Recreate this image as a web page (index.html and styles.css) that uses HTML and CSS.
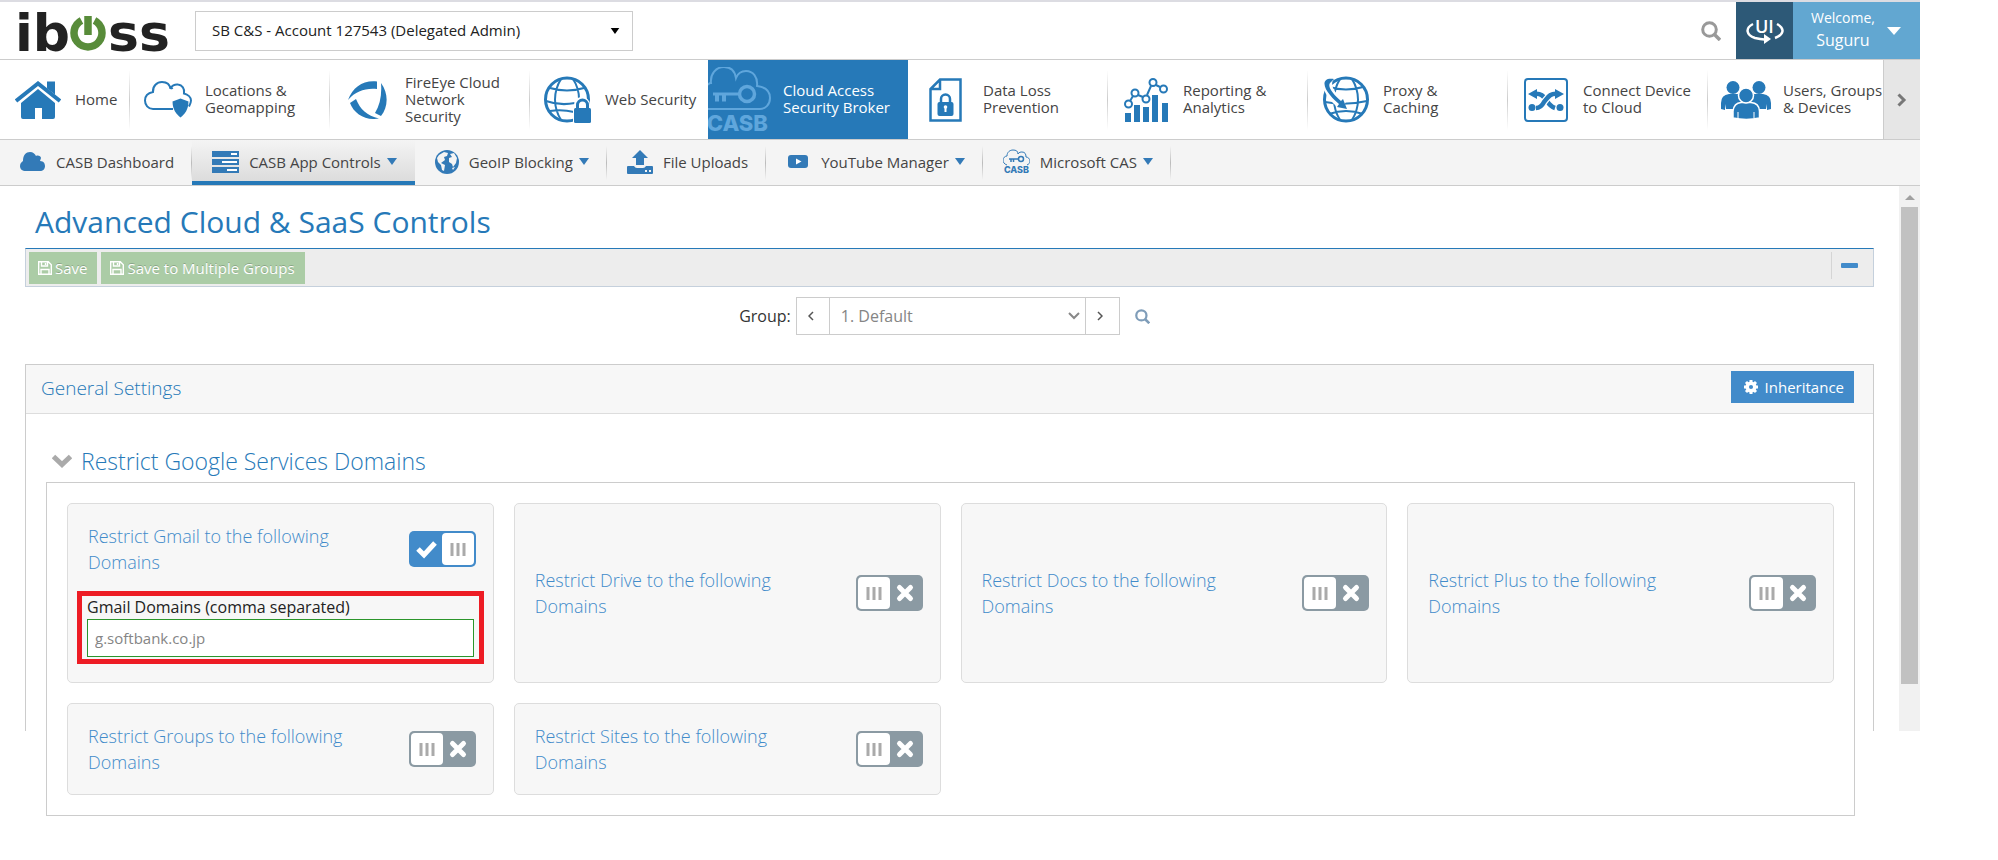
FILE: index.html
```html
<!DOCTYPE html>
<html lang="en">
<head>
<meta charset="utf-8">
<title>Advanced Cloud &amp; SaaS Controls</title>
<link rel="stylesheet" href="styles.css">
</head>
<body>
<svg class="defs" aria-hidden="true">
  <symbol id="caret" viewBox="0 0 10 7"><path d="M0 0h10L5 7z" fill="currentColor"/></symbol>
  <symbol id="magnifier" viewBox="0 0 20 20"><circle cx="8.500" cy="8.500" r="6.800" fill="none" stroke="currentColor" stroke-width="3"/><path d="M13 13l6 6" stroke="currentColor" stroke-width="3.500"/></symbol>
  <symbol id="floppy" viewBox="0 0 14 14"><path d="M.7.700h9.600l3 3v9.600H.7zM3 13V8.500h8V13M3.500 1v4h6V1M7.500 2v2" fill="none" stroke="currentColor" stroke-width="1.400"/></symbol>
  <symbol id="casb" viewBox="0 0 64 66">
    <path d="M0 18C1 16 2 16 3 16 2 7 8 0 16 0s11 5 12 11c2-5 6-7 10-7 7 0 12 6 11 15 8 1 13 5 13 12s-5 11-10 11H0" fill="none" stroke="currentColor" stroke-width="2"/>
    <circle cx="39" cy="27" r="7.500" fill="none" stroke="currentColor" stroke-width="3.500"/>
    <path d="M5 25.500h27v3H18v6h-4v-6h-3v6H7v-6H5z" fill="currentColor"/>
    <text x="60" y="64" text-anchor="end" class="casb-text">CASB</text>
  </symbol>
  <symbol id="toggle-on" viewBox="0 0 67 36">
    <rect x="33" y="2" width="32" height="32" rx="4" fill="#fff"/>
    <path d="M43 12v13M49 12v13M55 12v13" stroke="#aaa" stroke-width="3"/>
    <path d="M9 18l6 6 11-12" fill="none" stroke="#fff" stroke-width="5"/>
  </symbol>
  <symbol id="toggle-off" viewBox="0 0 67 36">
    <rect x="2" y="2" width="32" height="32" rx="4" fill="#fff"/>
    <path d="M12 12v13M18 12v13M24 12v13" stroke="#aaa" stroke-width="3"/>
    <path d="M43.500 12.500l11 11M54.500 12.500l-11 11" fill="none" stroke="#fff" stroke-width="5" stroke-linecap="round"/>
  </symbol>
</svg>

<div class="app">
  <header class="topbar">
    <a class="logo" href="#" aria-label="iboss">
      <svg width="152" height="44" viewBox="0 0 152 44">
        <text class="logo-text" x="-4" y="42">ib</text>
        <text class="logo-text" x="89" y="42">ss</text>
        <path d="M62.500 11.500a14 14 0 1 0 13 0" fill="none" stroke="#588c3a" stroke-width="7.500"/>
        <path d="M69 7v19" stroke="#588c3a" stroke-width="7.500"/>
      </svg>
    </a>
    <div class="picker account">
      <select aria-label="Account"><option>SB C&amp;S - Account 127543 (Delegated Admin)</option></select>
      <svg class="picker-caret" width="10" height="6"><use href="#caret"/></svg>
    </div>
    <div class="top-actions">
      <button class="top-search" type="button" aria-label="Search"><svg width="20" height="20"><use href="#magnifier"/></svg></button>
      <button class="ui-switch" type="button" aria-label="Switch UI">
        <svg width="38" height="28" viewBox="0 0 38 28">
          <text class="ui-text" x="9" y="16">UI</text>
          <path d="M7 7C-1 11 0 18 9 21c4 1 9 2 13 1M31 7c9 5 6 11-2 14" fill="none" stroke="#fff" stroke-width="2.500"/>
          <path d="M18 17l7 5-7 5z" fill="#fff"/>
        </svg>
      </button>
      <button class="user-menu" type="button">
        <span class="user-text"><span>Welcome,</span><span class="user-name">Suguru</span></span>
        <svg width="14" height="8" viewBox="0 0 14 8"><path d="M0 0h14L7 8z" fill="#fff"/></svg>
      </button>
    </div>
  </header>

  <div class="mainnav">
    <nav class="mainnav-items" aria-label="Main">
      <a class="nav-item nav-home" href="#"><span class="nav-icon"><svg width="46" height="38" viewBox="0 0 46 38"><path d="M1 20L23 2.500 45 20" fill="none" stroke="currentColor" stroke-width="4"/><path d="M32 .5h8v13l-8-6z" fill="currentColor"/><path d="M6 22L23 8l17 14v14q0 2-2 2H27V27h-7v11H8q-2 0-2-2z" fill="currentColor"/></svg></span><span class="nav-text">Home</span></a>
      <a class="nav-item" href="#"><span class="nav-icon"><svg width="48" height="37" viewBox="0 0 48 37"><path d="M29 28H9C4 28 1 24 1 19.500S4 12 9 11C8.500 5 13 1 18 1c5 0 8 3 8.500 7C27 5 31 3 34 3.500c4 .500 7 4 6 9 4 1 7 4 7 7 0 2-1 4-2 6M26.500 5l2 3" fill="none" stroke="currentColor" stroke-width="2"/><path d="M36.500 17.500l8 3c0 8-4 13-8 16-4-3-8-8-8-16z" fill="currentColor"/></svg></span><span class="nav-text">Locations &amp;<br>Geomapping</span></a>
      <a class="nav-item" href="#"><span class="nav-icon"><svg width="39" height="38" viewBox="0 0 39 38"><path d="M0 19C5 6 15-1 29 .500V8C17 7 8 10 0 19zM33 2c8 11 7 24 0 33l-6-3c5-8 7-18 6-30zM2 22l6-4c4 10 11 17 23 19.500C18 40 6 33 2 22z" fill="currentColor"/></svg></span><span class="nav-text">FireEye Cloud<br>Network<br>Security</span></a>
      <a class="nav-item nav-web" href="#"><span class="nav-icon"><svg width="47" height="48" viewBox="0 0 47 48"><g fill="none" stroke="currentColor"><circle cx="23" cy="23.500" r="21.500" stroke-width="3"/><path d="M17 3C9 16 9 31 17 44M29 3c4 6 6 12 6 20M6 12q17 5 34 0M2 25q14 5 29 2M6 35q12-2 24 1" stroke-width="2"/></g><path d="M29 32h1v-3a8 8 0 0 1 16 0v18H29z" fill="#fff"/><rect x="30" y="32" width="17" height="15" rx="1.500" fill="currentColor"/><path d="M33.500 33v-4a5 5 0 0 1 10 0v4" fill="none" stroke="currentColor" stroke-width="3"/></svg></span><span class="nav-text">Web Security</span></a>
      <a class="nav-item nav-active" href="#" aria-current="page"><span class="nav-icon nav-icon-casb"><svg width="64" height="66"><use href="#casb"/></svg></span><span class="nav-text">Cloud Access<br>Security Broker</span></a>
      <a class="nav-item" href="#"><span class="nav-icon"><svg width="33" height="44" viewBox="0 0 33 44"><path d="M11 1.500h20.500v41h-30V11zM1.500 11H11V1.500" fill="none" stroke="currentColor" stroke-width="2.500"/><path d="M12 25v-4a4.500 4.500 0 0 1 9 0v4" fill="none" stroke="currentColor" stroke-width="2.500"/><rect x="8.500" y="24" width="16" height="14" rx="2" fill="currentColor"/><path d="M16.500 28v6" stroke="#fff" stroke-width="2"/><circle cx="16.500" cy="29" r="1.800" fill="#fff"/></svg></span><span class="nav-text">Data Loss<br>Prevention</span></a>
      <a class="nav-item" href="#"><span class="nav-icon"><svg width="44" height="44" viewBox="0 0 44 44"><path d="M1 35h6v9H1zM10 27h6v17h-6zM19 29h6v15h-6zM28 17h6v27h-6zM38 25h6v19h-6z" fill="currentColor"/><g fill="none" stroke="currentColor" stroke-width="2"><path d="M6 23l3-5M14 17l5 2M23 17l4-9M32 7l4 2"/><circle cx="4.500" cy="26" r="3.500"/><circle cx="11" cy="15" r="3.500"/><circle cx="22" cy="21" r="3.500"/><circle cx="29" cy="4.500" r="3.500"/><circle cx="39.500" cy="11" r="3.500"/></g></svg></span><span class="nav-text">Reporting &amp;<br>Analytics</span></a>
      <a class="nav-item" href="#"><span class="nav-icon"><svg width="47" height="47" viewBox="0 0 47 47"><g fill="none" stroke="currentColor"><circle cx="24" cy="23.500" r="21.500" stroke-width="3"/><path d="M18 3C10 16 10 31 18 44M30 3c8 13 8 28 0 41M7 11q17 5 34 0M3 26q20 4 42-1M7 38q17-6 34 0" stroke-width="2"/></g><path d="M7 2c-5 10 4 20 14 28" fill="none" stroke="#fff" stroke-width="9"/><path d="M12 3C-1 1 1 11 8 19c3 4 6 6 9 9l-2 3 10 2-4-10-2 2C12 19 5 11 8 7z" fill="currentColor"/></svg></span><span class="nav-text">Proxy &amp;<br>Caching</span></a>
      <a class="nav-item" href="#"><span class="nav-icon"><svg width="44" height="44" viewBox="0 0 44 44"><rect x="1" y="1" width="42" height="42" rx="3" fill="none" stroke="currentColor" stroke-width="2"/><g fill="none" stroke="currentColor" stroke-width="4.500"><path d="M10 16c8-1 10 3 13 7 3 5 5 6 8 7"/><path d="M34 16c-8-1-10 3-14 8-2 4-4 6-7 6" stroke="#fff" stroke-width="7"/><path d="M34 16c-8-1-10 3-14 8-2 4-4 6-8 6"/></g><path d="M13 11v10l-9-5zM31 11v10l9-5z" fill="currentColor"/><circle cx="8" cy="29.500" r="3.500" fill="currentColor"/><circle cx="36" cy="29.500" r="3.500" fill="currentColor"/></svg></span><span class="nav-text">Connect Device<br>to Cloud</span></a>
      <a class="nav-item" href="#"><span class="nav-icon"><svg width="50" height="38" viewBox="0 0 50 38"><g fill="currentColor"><circle cx="12" cy="6.500" r="6.500"/><circle cx="38" cy="6.500" r="6.500"/><path d="M0 28V22q0-8 8-9h8q8 1 8 9v6H5l-1-5v6zM50 28V22q0-8-8-9h-8q-8 1-8 9v6h19l1-5v6z"/></g><g fill="currentColor" stroke="#fff" stroke-width="1.500"><path d="M12 37v-7q1-8 8-8.500h10q8 .500 8.500 8.500v7q-13 3-26.500 0z"/><circle cx="25" cy="14.500" r="7.500"/></g><path d="M17 31v6M33 31v6" stroke="#fff" stroke-width="1"/></svg></span><span class="nav-text">Users, Groups<br>&amp; Devices</span></a>
    </nav>
    <button class="nav-more" type="button" aria-label="More"><svg width="10" height="14" viewBox="0 0 10 14"><path d="M1.500 1.500L7 7l-5.500 5.500" fill="none" stroke="#777" stroke-width="3"/></svg></button>
  </div>

  <nav class="subnav" aria-label="Cloud Access Security Broker">
    <a class="sub-item" href="#"><svg width="26" height="20" viewBox="0 0 26 20"><path d="M6 19C2 19 0 17 0 14c0-3 2-4 3-5 0-6 3-9 7-9 3 0 5 2 6 4 2-1 5 0 5 2l-1 3c4 0 5 3 5 5 0 3-2 5-5 5z" fill="currentColor"/></svg><span>CASB Dashboard</span></a>
    <a class="sub-item sub-active" href="#" aria-current="page"><svg width="27" height="22" viewBox="0 0 27 22"><path d="M0 0h27v6H0zM0 8h27v6H0zM0 16h27v6H0z" fill="currentColor"/><path d="M19 3h6M10 11h15M15 19h10" stroke="#fff" stroke-width="2"/></svg><span>CASB App Controls</span><svg class="sub-caret" width="10" height="7"><use href="#caret"/></svg></a>
    <a class="sub-item" href="#"><svg width="24" height="24" viewBox="0 0 24 24"><circle cx="12" cy="12" r="12" fill="currentColor"/><path d="M4 5l5-3 4 1-1 3-3 1 1 3-4 3 4 2-1 6-2-1-1-5-3-3-1-4zM15 4l4-1 3 5-1 5-3 4-1-3-3-2 0-4 3-1zM17 18l3-1-2 3z" fill="#f4f4f4"/></svg><span>GeoIP Blocking</span><svg class="sub-caret" width="10" height="7"><use href="#caret"/></svg></a>
    <a class="sub-item" href="#"><svg width="26" height="24" viewBox="0 0 26 24"><path d="M13 0l8 8h-4v7H9V8H5z" fill="currentColor"/><path d="M1 16h6q1 2 3 2h6q2 0 3-2h6q1 0 1 1v6q0 1-1 1H1q-1 0-1-1v-6q0-1 1-1z" fill="currentColor"/><path d="M18 21h2M22 21h2" stroke="#f4f4f4" stroke-width="2"/></svg><span>File Uploads</span></a>
    <a class="sub-item sub-youtube" href="#"><svg class="sub-video" width="20" height="13" viewBox="0 0 20 13"><rect width="20" height="13" rx="3" fill="currentColor"/><path d="M8 3.500l5.500 3L8 9.500z" fill="#fff"/></svg><span>YouTube Manager</span><svg class="sub-caret" width="10" height="7"><use href="#caret"/></svg></a>
    <a class="sub-item" href="#"><svg width="27" height="25" viewBox="0 0 27 25"><path d="M4 16C1 15 0 13 0 11s2-4 4-4c0-4 3-6 6-6s5 1 5 4c1-2 3-2 4-2 3 0 4 2 4 5 2 0 4 2 4 4s-1 3-3 4" fill="none" stroke="currentColor"/><circle cx="18" cy="10" r="2.500" fill="none" stroke="currentColor" stroke-width="1.500"/><path d="M6 10h9.500M8 10v3M10.500 10v3" stroke="currentColor" stroke-width="1.500" fill="none"/><text x="13.500" y="24" text-anchor="middle" class="casb-mini">CASB</text></svg><span>Microsoft CAS</span><svg class="sub-caret" width="10" height="7"><use href="#caret"/></svg></a>
  </nav>

  <div class="workspace">
    <main class="content">
      <h1>Advanced Cloud &amp; SaaS Controls</h1>
      <div class="toolbar">
        <button class="save" type="button"><svg width="14" height="14"><use href="#floppy"/></svg>Save</button>
        <button class="save" type="button"><svg width="14" height="14"><use href="#floppy"/></svg>Save to Multiple Groups</button>
        <button class="collapse" type="button" aria-label="Collapse"><svg width="17" height="5"><rect width="17" height="5" rx="1" fill="#428bca"/></svg></button>
      </div>

      <div class="group-row">
        <label for="group">Group:</label>
        <div class="group-control">
          <button type="button" aria-label="Previous group"><svg width="6" height="10" viewBox="0 0 6 10"><path d="M5 1L1 5l4 4" fill="none" stroke="#555" stroke-width="1.500"/></svg></button>
          <div class="picker">
            <select id="group"><option>1. Default</option></select>
            <svg class="picker-caret" width="12" height="8" viewBox="0 0 12 8"><path d="M1 1l5 5 5-5" fill="none" stroke="#888" stroke-width="2"/></svg>
          </div>
          <button type="button" aria-label="Next group"><svg width="6" height="10" viewBox="0 0 6 10"><path d="M1 1l4 4-4 4" fill="none" stroke="#555" stroke-width="1.500"/></svg></button>
        </div>
        <button class="group-search" type="button" aria-label="Find group"><svg width="15" height="15"><use href="#magnifier"/></svg></button>
      </div>

      <section class="panel">
        <div class="panel-head">
          <h2>General Settings</h2>
          <button class="inherit" type="button"><svg width="14" height="14" viewBox="0 0 14 14"><circle cx="7" cy="7" r="3.800" fill="none" stroke="#fff" stroke-width="3.500"/><path d="M7 0v2M7 12v2M0 7h2M12 7h2M2 2l2 2M10 10l2 2M2 12l2-2M10 4l2-2" stroke="#fff" stroke-width="3"/></svg>Inheritance</button>
        </div>
        <div class="panel-body">
          <h3><svg width="20" height="14" viewBox="0 0 20 14"><path d="M1.500 2.500L10 10.500l8.500-8" fill="none" stroke="#aaa" stroke-width="5"/></svg>Restrict Google Services Domains</h3>
          <div class="cards">
            <div class="card">
              <div class="card-row"><label for="gmail">Restrict Gmail to the following Domains</label><span class="toggle"><input type="checkbox" id="gmail" checked><svg class="on"><use href="#toggle-on"/></svg><svg class="off"><use href="#toggle-off"/></svg></span></div>
              <div class="domains"><label for="gmail-domains">Gmail Domains (comma separated)</label><input type="text" id="gmail-domains" value="g.softbank.co.jp"></div>
            </div>
            <div class="card"><div class="card-row"><label for="drive">Restrict Drive to the following Domains</label><span class="toggle"><input type="checkbox" id="drive"><svg class="on"><use href="#toggle-on"/></svg><svg class="off"><use href="#toggle-off"/></svg></span></div></div>
            <div class="card"><div class="card-row"><label for="docs">Restrict Docs to the following Domains</label><span class="toggle"><input type="checkbox" id="docs"><svg class="on"><use href="#toggle-on"/></svg><svg class="off"><use href="#toggle-off"/></svg></span></div></div>
            <div class="card"><div class="card-row"><label for="plus">Restrict Plus to the following Domains</label><span class="toggle"><input type="checkbox" id="plus"><svg class="on"><use href="#toggle-on"/></svg><svg class="off"><use href="#toggle-off"/></svg></span></div></div>
            <div class="card"><div class="card-row"><label for="groups">Restrict Groups to the following Domains</label><span class="toggle"><input type="checkbox" id="groups"><svg class="on"><use href="#toggle-on"/></svg><svg class="off"><use href="#toggle-off"/></svg></span></div></div>
            <div class="card"><div class="card-row"><label for="sites">Restrict Sites to the following Domains</label><span class="toggle"><input type="checkbox" id="sites"><svg class="on"><use href="#toggle-on"/></svg><svg class="off"><use href="#toggle-off"/></svg></span></div></div>
          </div>
        </div>
      </section>
    </main>
    <div class="scrollbar" aria-hidden="true">
      <svg width="10" height="5" viewBox="0 0 10 5"><path d="M0 5l5-5 5 5z" fill="#a0a0a0"/></svg>
      <div class="thumb"></div>
    </div>
  </div>
</div>
</body>
</html>
```
FILE: styles.css
```css
* { box-sizing: border-box; }
body {
  margin: 0;
  padding-right: 78px;
  background: #fff;
  color: #333;
  font: 15px/20px "Open Sans", "Noto Sans", sans-serif;
}
button, input, select { font: inherit; color: inherit; border-radius: 0; }
button { margin: 0; padding: 0; border: 0; background: none; cursor: pointer; }
a { color: inherit; text-decoration: none; }
svg { display: block; flex: none; }
h1, h2, h3 { margin: 0; font-weight: 400; color: #2679b8; }
.defs { position: absolute; width: 0; height: 0; }
.app { min-height: 100vh; }

/* Top bar */
.topbar {
  display: flex;
  align-items: center;
  height: 60px;
  border-top: 2px solid #dcdce2;
  border-bottom: 1px solid #ccc;
}
.logo { margin: 0 24px 0 19px; }
.logo svg, .ui-switch svg { overflow: visible; }
.logo-text { font: 700 52px "DejaVu Sans", sans-serif; fill: #222; }
.picker { display: grid; align-items: center; }
.picker select {
  grid-area: 1 / 1;
  width: 100%;
  appearance: none;
  background: #fff;
  border: 1px solid #ccc;
}
.picker-caret { grid-area: 1 / 1; justify-self: end; pointer-events: none; }
.account { width: 438px; color: #000; }
.account select { height: 40px; padding: 0 16px 2px; color: #222; }
.account .picker-caret { margin-right: 13px; }
.top-actions { display: flex; align-items: stretch; align-self: stretch; margin-left: auto; }
.top-search { padding: 0 15px; color: #999; }
.ui-switch { display: grid; place-items: center; width: 57px; background: #2d5977; }
.ui-text { font: 600 18px "Open Sans", sans-serif; fill: #fff; }
.user-menu {
  display: flex;
  align-items: center;
  justify-content: space-between;
  width: 127px;
  padding: 0 19px 0 18px;
  background: #62a7d1;
  color: #fff;
}
.user-text { display: flex; flex-direction: column; align-items: center; padding-bottom: 4px; line-height: 22px; font-size: 14px; }
.user-name { font-size: 16px; }

/* Main navigation */
.mainnav { display: flex; height: 80px; border-bottom: 1px solid #ccc; }
.mainnav-items { display: flex; flex: 1; min-width: 0; overflow: hidden; }
.nav-item {
  display: flex;
  flex: none;
  align-items: center;
  width: 200px;
  color: #444;
  line-height: 17px;
  white-space: nowrap;
  background: linear-gradient(transparent, #ccc, transparent) right center / 1px 60px no-repeat;
}
.nav-home { width: 130px; }
.nav-web { width: 178px; background: none; }
.nav-icon { display: grid; flex: none; place-items: center; width: 75px; color: #2679b8; }
.nav-text { padding-bottom: 1px; }
.nav-active { background: #2679b8; color: #fff; }
.nav-icon-casb { justify-items: start; color: #5fa6dc; }
.casb-text { font: 800 22px Inter, sans-serif; fill: currentColor; }
.casb-mini { font: 800 9px Inter, sans-serif; fill: #337ab7; }
.nav-more { display: grid; place-items: center; width: 37px; border-left: 1px solid #ccc; background: #e6e6e6; }

/* Secondary navigation */
.subnav { display: flex; height: 46px; background: #f4f4f4; border-bottom: 1px solid #ccc; }
.sub-item {
  display: flex;
  align-items: center;
  gap: 10px;
  padding: 0 18px 2px 20px;
  color: #444;
  white-space: nowrap;
  background: linear-gradient(transparent, #bbb, transparent) right center / 1px 34px no-repeat;
}
.sub-item svg { color: #337ab7; }
.sub-item .sub-caret { margin-left: -4px; }
.sub-youtube { padding-left: 22px; }
.sub-video { margin-right: 3px; }
.sub-active { background: linear-gradient(#f4f4f4, #dcdcdc); border-bottom: 4px solid #2679b8; padding-top: 2px; padding-bottom: 0; }

/* Workspace */
.workspace { display: flex; height: calc(100vh - 315px); }
.content { display: flex; flex: 1; flex-direction: column; min-width: 0; padding: 0 25px; }
.scrollbar { display: flex; flex-direction: column; align-items: center; gap: 7px; width: 21px; padding-top: 9px; background: #f1f1f1; }
.thumb { width: 17px; height: 89%; background: #c1c1c1; }
h1 { padding: 16px 10px 6px; font-size: 30px; line-height: 40px; }
.toolbar {
  display: flex;
  gap: 4px;
  padding: 3px 3px 2px;
  border: 1px solid #c5d0dc;
  border-top-color: #2679b8;
  background: #ededed;
}
.save { display: flex; align-items: center; gap: 3px; height: 32px; padding: 0 10px 0 9px; background: #abcca6; color: #fff; text-shadow: 0 -1px 0 rgba(0, 0, 0, .2); }
.collapse { height: 27px; margin-left: auto; padding: 0 12px 0 9px; border-left: 1px solid #d5d5d5; }
.group-row { display: flex; align-items: center; justify-content: center; margin: 10px 0 29px; padding-right: 10px; font-size: 16px; }
.group-control { display: grid; grid-template-columns: 32px 257px 33px; height: 38px; margin: 0 15px 0 5px; border: 1px solid #ccc; }
.group-control button { display: grid; place-items: center; padding-right: 4px; }
.group-control .picker select { height: 36px; padding: 0 11px; border-width: 0 1px; color: #858585; }
.group-control .picker-caret { margin-right: 6px; }
.group-search { color: #7f9db9; }

.panel { flex: 1; min-height: 0; border: 1px solid #ccc; border-bottom: 0; }
.panel-head {
  display: flex;
  align-items: center;
  justify-content: space-between;
  height: 49px;
  padding: 0 19px 0 15px;
  border-bottom: 1px solid #ddd;
  background: #f7f7f7;
}
.panel-head h2 { padding-bottom: 2px; font-size: 19px; font-weight: 350; }
.inherit { display: flex; align-items: center; gap: 7px; height: 32px; margin-bottom: 4px; padding: 0 10px 0 13px; background: #428bca; color: #fff; }
.panel-body { padding: 32px 18px 0 20px; }
h3 { display: flex; align-items: center; gap: 9px; padding-left: 6px; margin-bottom: 6px; font-size: 23px; font-weight: 350; line-height: 30px; }
.cards {
  display: grid;
  grid-template-columns: repeat(4, minmax(0, 1fr));
  gap: 20px;
  padding: 20px;
  border: 1px solid #ccc;
  background: #fff;
}
.card {
  display: flex;
  flex-direction: column;
  justify-content: center;
  gap: 16px;
  padding: 19px 17px 18px 20px;
  border: 1px solid #ddd;
  border-radius: 5px;
  background: #f7f7f7;
}
.card-row { display: flex; align-items: center; justify-content: space-between; padding-bottom: 1px; color: #428bca; font-size: 18px; font-weight: 350; line-height: 26px; }
.card-row:first-child:not(:last-child) { padding-bottom: 0; }
.card-row label { max-width: 262px; }
.toggle { display: grid; flex: none; width: 67px; height: 36px; }
.toggle input { grid-area: 1 / 1; width: 100%; height: 100%; margin: 0; appearance: none; border-radius: 5px; background: #8b9aa3; }
.toggle input:checked { background: #428bca; }
.toggle svg { grid-area: 1 / 1; width: 100%; height: 100%; pointer-events: none; }
.toggle input:checked ~ .off, .toggle input:not(:checked) ~ .on { display: none; }
.domains { display: flex; flex-direction: column; margin: 0 -8px 0 -11px; padding: 0 5px 2px; border: 5px solid #ed1c24; color: #222; font-size: 16px; line-height: 23px; }
.domains input { height: 38px; padding: 0 7px; border: 1px solid #2b952b; background: #fff; color: #858585; font-size: 15px; }
```
